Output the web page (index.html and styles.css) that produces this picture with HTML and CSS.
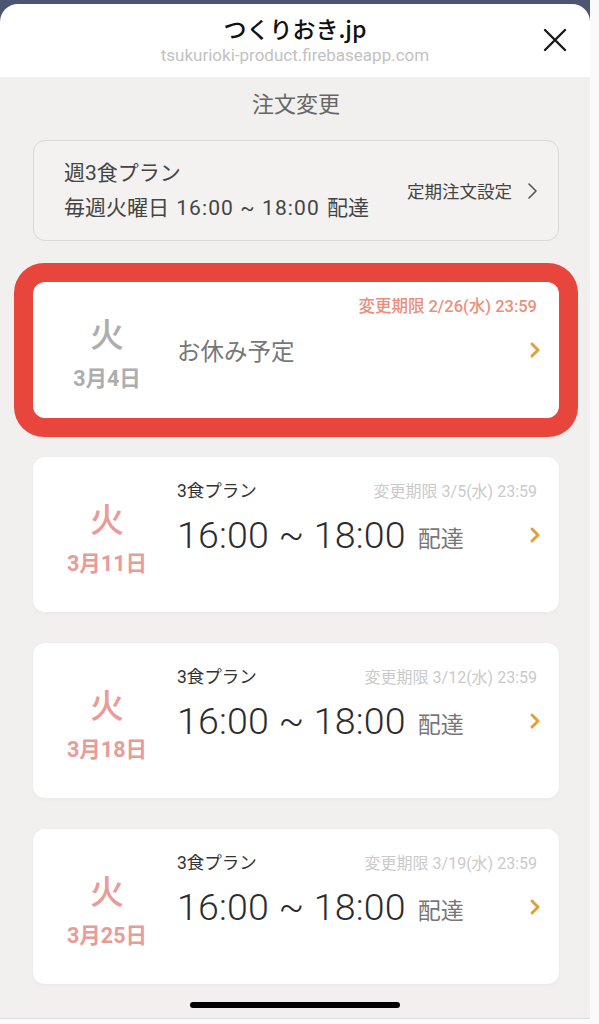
FILE: index.html
```html
<!DOCTYPE html>
<html lang="ja">
<head>
    <meta charset="UTF-8">
    <meta name="viewport" content="width=device-width, initial-scale=1.0">
    <title>注文変更 | つくりおき.jp</title>
    <link rel="stylesheet" href="styles.css">
</head>
<body>
    <div class="screen">
        <!-- モーダルのヘッダー -->
        <header class="sheet-header">
            <div></div>
            <div class="sheet-title">
                <h1>つくりおき.jp</h1>
                <p>tsukurioki-product.firebaseapp.com</p>
            </div>
            <button class="close-btn" aria-label="閉じる">
                <svg width="24" height="24" viewBox="0 0 24 24">
                    <path d="M2 2 L22 22 M22 2 L2 22" stroke="#1a1a1a" stroke-width="2.4" stroke-linecap="round" fill="none"/>
                </svg>
            </button>
        </header>

        <main class="content">
            <h2 class="page-title">注文変更</h2>

            <!-- 定期プラン -->
            <a class="plan-card" href="#">
                <div class="plan-text">
                    <p>週3食プラン</p>
                    <p>毎週火曜日 <span class="plan-time">16:00 ~ 18:00</span> 配達</p>
                </div>
                <div class="plan-link">
                    <span>定期注文設定</span>
                    <svg width="11" height="18" viewBox="0 0 11 18">
                        <polyline points="2,2 9,9 2,16" stroke="#555" stroke-width="1.6" fill="none" stroke-linecap="round" stroke-linejoin="round"/>
                    </svg>
                </div>
            </a>

            <!-- 配達予定 -->
            <a class="order-card holiday highlighted" href="#">
                <div class="order-date">
                    <span class="weekday">火</span>
                    <span class="day">3月4日</span>
                </div>
                <div class="order-main">
                    <div class="order-top">
                        <span></span>
                        <span class="deadline urgent">変更期限 2/26(水) 23:59</span>
                    </div>
                    <div class="order-row">
                        <span class="rest">お休み予定</span>
                        <svg class="chevron" width="12" height="18" viewBox="0 0 12 18">
                            <polyline points="3,3 9,9 3,15" stroke="#e3a03a" stroke-width="3" fill="none" stroke-linecap="round" stroke-linejoin="round"/>
                        </svg>
                    </div>
                </div>
            </a>

            <a class="order-card" href="#">
                <div class="order-date">
                    <span class="weekday">火</span>
                    <span class="day">3月11日</span>
                </div>
                <div class="order-main">
                    <div class="order-top">
                        <span class="plan-name">3食プラン</span>
                        <span class="deadline">変更期限 3/5(水) 23:59</span>
                    </div>
                    <div class="order-row">
                        <span class="time">16:00 ~ 18:00</span>
                        <span class="delivery">配達</span>
                        <svg class="chevron" width="12" height="18" viewBox="0 0 12 18">
                            <polyline points="3,3 9,9 3,15" stroke="#e3a03a" stroke-width="3" fill="none" stroke-linecap="round" stroke-linejoin="round"/>
                        </svg>
                    </div>
                </div>
            </a>

            <a class="order-card" href="#">
                <div class="order-date">
                    <span class="weekday">火</span>
                    <span class="day">3月18日</span>
                </div>
                <div class="order-main">
                    <div class="order-top">
                        <span class="plan-name">3食プラン</span>
                        <span class="deadline">変更期限 3/12(水) 23:59</span>
                    </div>
                    <div class="order-row">
                        <span class="time">16:00 ~ 18:00</span>
                        <span class="delivery">配達</span>
                        <svg class="chevron" width="12" height="18" viewBox="0 0 12 18">
                            <polyline points="3,3 9,9 3,15" stroke="#e3a03a" stroke-width="3" fill="none" stroke-linecap="round" stroke-linejoin="round"/>
                        </svg>
                    </div>
                </div>
            </a>

            <a class="order-card" href="#">
                <div class="order-date">
                    <span class="weekday">火</span>
                    <span class="day">3月25日</span>
                </div>
                <div class="order-main">
                    <div class="order-top">
                        <span class="plan-name">3食プラン</span>
                        <span class="deadline">変更期限 3/19(水) 23:59</span>
                    </div>
                    <div class="order-row">
                        <span class="time">16:00 ~ 18:00</span>
                        <span class="delivery">配達</span>
                        <svg class="chevron" width="12" height="18" viewBox="0 0 12 18">
                            <polyline points="3,3 9,9 3,15" stroke="#e3a03a" stroke-width="3" fill="none" stroke-linecap="round" stroke-linejoin="round"/>
                        </svg>
                    </div>
                </div>
            </a>

            <div class="home-indicator"></div>
        </main>
    </div>
</body>
</html>
```

FILE: styles.css
```css
body {
    margin: 0;
    background-color: #fafafa;
    font-family: "Roboto", "Noto Sans CJK JP", sans-serif;
    color: #333;
}
a {
    text-decoration: none;
    color: inherit;
}
.screen {
    width: 590px;
    height: 1018px;
    overflow: hidden;
    background-color: #4b5672;
    border-bottom: 1px solid #dcdcdc;
    display: flex;
    flex-direction: column;
}

/* ヘッダー */
.sheet-header {
    margin-top: 4px;
    height: 73px;
    box-sizing: border-box;
    padding-top: 9px;
    background-color: #fff;
    border-radius: 18px 18px 0 0;
    display: grid;
    grid-template-columns: 1fr auto 1fr;
    align-items: start;
}
.sheet-title {
    text-align: center;
}
.sheet-title h1 {
    margin: 0 0 1px;
    font-size: 23px;
    font-weight: 500;
    line-height: 30px;
    color: #111;
    font-family: "Noto Sans CJK JP", sans-serif;
}
.sheet-title p {
    margin: 0;
    font-size: 17px;
    line-height: 22px;
    color: #c2c2c2;
}
.close-btn {
    justify-self: end;
    margin-right: 23px;
    margin-top: 15px;
    padding: 0;
    border: none;
    background: none;
    width: 24px;
    height: 24px;
}

/* 本体 */
.content {
    flex: 1;
    background-color: #f1f0ee;
    padding: 0 31px 0 33px;
    display: flex;
    flex-direction: column;
}
.page-title {
    margin: 14px 0 0;
    text-align: center;
    font-size: 22px;
    font-weight: 400;
    line-height: 28px;
    color: #666;
}

.plan-card {
    margin-top: 21px;
    height: 101px;
    box-sizing: border-box;
    border: 1px solid #d8d8d6;
    border-radius: 12px;
    background-color: #f3f2f0;
    display: flex;
    align-items: center;
    padding: 0 20px 0 30px;
    color: #444;
}
.plan-text {
    flex: 1;
}
.plan-text p {
    margin: 0;
    font-size: 21px;
    line-height: 35px;
    word-spacing: 2px;
}
.plan-time {
    letter-spacing: 1.1px;
    word-spacing: 0;
}
.plan-link {
    display: flex;
    align-items: center;
    gap: 15px;
    font-size: 17.5px;
    color: #444;
}

/* 配達カード */
.order-card {
    margin-top: 31px;
    min-height: 155px;
    background-color: #fff;
    border-radius: 12px;
    box-shadow: 0 1px 4px rgba(0, 0, 0, 0.04);
    display: flex;
    align-items: center;
}
.order-card.holiday {
    min-height: 136px;
    margin-top: 41px;
    margin-bottom: 8px;
}
.order-card.highlighted {
    box-shadow: 0 0 0 19px #e8453c;
}
.order-date {
    width: 144px;
    padding-left: 4px;
    box-sizing: border-box;
    display: flex;
    flex-direction: column;
    align-items: center;
    color: #e99b98;
    padding-top: 6px;
}
.holiday .order-date {
    color: #adadad;
}
.weekday {
    font-size: 34px;
    line-height: 40px;
    font-weight: 500;
    margin-bottom: 12px;
    font-family: "Noto Sans CJK JP", sans-serif;
}
.day {
    font-size: 21.5px;
    line-height: 28px;
    font-weight: 700;
}
.order-main {
    flex: 1;
    padding-right: 22px;
    padding-bottom: 34px;
    display: flex;
    flex-direction: column;
    gap: 8px;
}
.order-top {
    display: flex;
    justify-content: space-between;
    align-items: center;
    height: 26px;
}
.plan-name {
    font-size: 17.5px;
    color: #333;
}
.deadline {
    font-size: 16px;
    color: #cacaca;
}
.deadline.urgent {
    font-size: 16.5px;
    color: #eb8f7c;
    font-weight: 500;
}
.order-row {
    height: 48px;
    display: flex;
    align-items: center;
}
.time {
    font-size: 37.5px;
    font-weight: 300;
    color: #2c2c2c;
    letter-spacing: 0.2px;
}
.delivery {
    font-size: 23px;
    color: #777;
    margin-left: 12px;
    margin-top: 4px;
}
.rest {
    font-size: 23.5px;
    color: #777;
}
.chevron {
    margin-left: auto;
    margin-right: -4px;
}

.home-indicator {
    width: 210px;
    height: 6px;
    border-radius: 3px;
    background-color: #000;
    margin: 18px auto 0;
    position: relative;
    left: -1px;
}
```
